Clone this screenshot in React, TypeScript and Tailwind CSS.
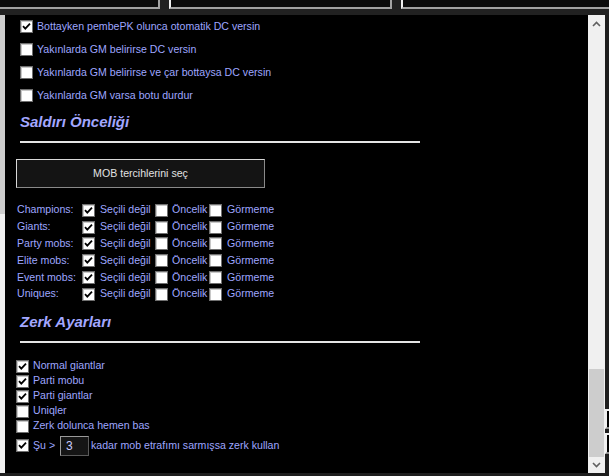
import type { ReactNode } from 'react'

const font = { fontFamily: '"Liberation Sans", Arial, sans-serif' }

function Box({ checked }: { checked?: boolean }) {
  return (
    <span className="flex h-[13px] w-[13px] shrink-0 items-center justify-center border border-[#6f6f6f] bg-white shadow-[inset_1px_1px_0_#c8c8c8]">
      {checked && (
        <svg width="9" height="9" viewBox="0 0 9 9">
          <path d="M1 4.2 L3.3 6.6 L8 1.6" stroke="#000" strokeWidth="1.8" fill="none" />
        </svg>
      )}
    </span>
  )
}

function Heading({ children }: { children: ReactNode }) {
  return (
    <>
      <div className="ml-[15px] h-[20px] text-[15px] font-bold italic leading-[20px] text-[#a3a7ff]">{children}</div>
      <div className="ml-[15px] mt-[9px] h-[2px] w-[400px] bg-[#e4e4e4]" />
    </>
  )
}

const dcOptions = [
  { label: 'Bottayken pembePK olunca otomatik DC versin', on: true },
  { label: 'Yakınlarda GM belirirse DC versin', on: false },
  { label: 'Yakınlarda GM belirirse ve çar bottaysa DC versin', on: false },
  { label: 'Yakınlarda GM varsa botu durdur', on: false },
]

const mobs = ['Champions:', 'Giants:', 'Party mobs:', 'Elite mobs:', 'Event mobs:', 'Uniques:']

const zerk = [
  { label: 'Normal giantlar', on: true },
  { label: 'Parti mobu', on: true },
  { label: 'Parti giantlar', on: true },
  { label: 'Uniqler', on: false },
  { label: 'Zerk dolunca hemen bas', on: false },
]

export default function App() {
  return (
    <div className="flex h-[476px] w-[609px] flex-col overflow-hidden bg-[#1e1e1e] text-[10.6px] text-[#9ea6ff]" style={font}>
      {/* top tab buttons, mostly scrolled out of view */}
      <div className="flex h-[15px] shrink-0 items-start gap-[9px] bg-[#212121]">
        <div className="h-[9px] w-[160px] border-b-2 border-r-2 border-[#a3a3a3] bg-[#0c0c0c]" />
        <div className="h-[9px] w-[223px] border-b-2 border-l-2 border-r-2 border-[#a3a3a3] border-l-[#f0f0f0] bg-[#0c0c0c]" />
        <div className="h-[9px] flex-1 border-b-2 border-l-2 border-[#a3a3a3] border-l-[#f0f0f0] bg-[#0c0c0c]" />
      </div>

      <div className="flex h-[458px] shrink-0">
        <div className="flex w-[5px] flex-col bg-[#f0f0f0]">
          <div className="h-[199px] bg-[#cdcdcd]" />
        </div>

        <div className="flex-1 bg-black">
          {dcOptions.map((o) => (
            <div key={o.label} className="flex h-[23px] items-center gap-[4px] pl-[15px]">
              <Box checked={o.on} />
              <span>{o.label}</span>
            </div>
          ))}

          <div className="mt-[5px]">
            <Heading>Saldırı Önceliği</Heading>
          </div>

          <button
            type="button"
            className="ml-[11px] mt-[16px] flex h-[29px] w-[249px] items-center justify-center border border-[#d8d8d8] border-b-[#8a8a8a] border-r-[#8a8a8a] bg-[#141414] text-[10.6px] text-[#e2e2e2]"
          >
            MOB tercihlerini seç
          </button>

          <div className="mt-[14px] pl-[12px]">
            {mobs.map((m) => (
              <div key={m} className="flex h-[16.8px] items-center">
                <span className="w-[65px]">{m}</span>
                <Box checked />
                <span className="ml-[5px] w-[55px]">Seçili değil</span>
                <Box />
                <span className="ml-[4px] w-[37px]">Öncelik</span>
                <Box />
                <span className="ml-[5px]">Görmeme</span>
              </div>
            ))}
          </div>

          <div className="mt-[9px]">
            <Heading>Zerk Ayarları</Heading>
          </div>

          <div className="mt-[16px] pl-[11px]">
            {zerk.map((z) => (
              <div key={z.label} className="flex h-[15px] items-center gap-[4px]">
                <Box checked={z.on} />
                <span>{z.label}</span>
              </div>
            ))}
            <div className="mt-[1px] flex h-[22px] items-center">
              <Box checked />
              <span className="ml-[4px] w-[27px]">Şu &gt;</span>
              <div className="flex h-[20px] w-[29px] items-center border border-[#9a9a9a] border-b-[#5a5a5a] border-r-[#5a5a5a] bg-[#151515] pl-[5px] text-[12px] text-[#c9ccff]">
                3
              </div>
              <span className="ml-[2px]">kadar mob etrafımı sarmışsa zerk kullan</span>
            </div>
          </div>
        </div>

        {/* scrollbar */}
        <div className="flex w-[17px] flex-col bg-[#f0f0f0]">
          <div className="flex h-[17px] items-center justify-center">
            <svg width="9" height="6" viewBox="0 0 9 6">
              <path d="M1 5 L4.5 1.5 L8 5" stroke="#606060" strokeWidth="1.6" fill="none" />
            </svg>
          </div>
          <div className="flex flex-1 flex-col justify-end px-[1px]">
            <div className="h-[88px] bg-[#cdcdcd]" />
          </div>
          <div className="flex h-[16px] items-center justify-center">
            <svg width="9" height="6" viewBox="0 0 9 6">
              <path d="M1 1 L4.5 4.5 L8 1" stroke="#606060" strokeWidth="1.6" fill="none" />
            </svg>
          </div>
        </div>

        <div className="flex w-[4px] flex-col bg-[#1e1e1e]">
          <div className="mt-[394px] h-[20px] border-l-2 border-t-2 border-[#f0f0f0] border-b-2 border-b-[#8a8a8a] bg-black" />
          <div className="mt-[4px] h-[21px] border-l-2 border-t-2 border-[#f0f0f0] border-b-2 border-b-[#8a8a8a] bg-black" />
        </div>
      </div>

      <div className="h-[3px] overflow-hidden pl-[17px] text-[11px] leading-[14px] text-[#d0d0d0]">
        Uzakta botta durdur
      </div>
    </div>
  )
}
